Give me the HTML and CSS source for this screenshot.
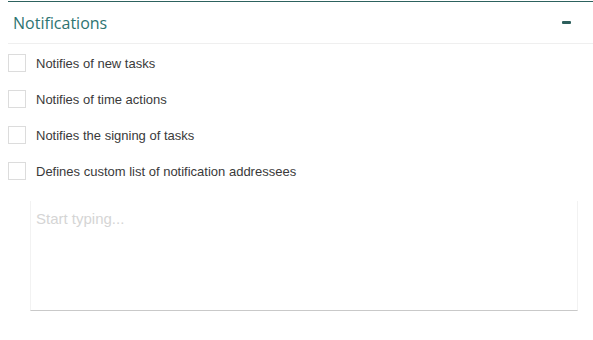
FILE: index.html
```html
<!DOCTYPE html>
<html>
<head>
<meta charset="utf-8">
<link rel="stylesheet" href="styles.css">
</head>
<body>
<section class="panel">
  <header class="panel-head">
    <h2 class="panel-title">Notifications</h2>
    <span class="collapse-icon" aria-label="collapse"></span>
  </header>
  <div class="panel-body">
    <label class="option"><span class="box"></span><span class="label">Notifies of new tasks</span></label>
    <label class="option"><span class="box"></span><span class="label">Notifies of time actions</span></label>
    <label class="option"><span class="box"></span><span class="label">Notifies the signing of tasks</span></label>
    <label class="option"><span class="box"></span><span class="label">Defines custom list of notification addressees</span></label>
    <div class="recipients">
      <div class="placeholder">Start typing...</div>
    </div>
  </div>
</section>
</body>
</html>
```
FILE: styles.css
```css
html, body {
  margin: 0;
  padding: 0;
  background: #fff;
}
body {
  padding-left: 8px;
  font-family: "Liberation Sans", Arial, sans-serif;
}
.panel {
  border-top: 1px solid #2d625e;
  margin-top: 1px;
}
.panel-head {
  display: flex;
  align-items: center;
  justify-content: space-between;
  height: 41px;
  border-bottom: 1px solid #efefef;
  padding: 0 22px 0 5px;
}
.panel-title {
  margin: 0;
  font-family: "Open Sans", sans-serif;
  font-weight: 400;
  font-size: 16px;
  color: #2e7471;
}
.collapse-icon {
  width: 9px;
  height: 3px;
  background: #2d5f5c;
  border-radius: 1px;
}
.panel-body {
  display: flex;
  flex-direction: column;
  padding-top: 10px;
}
.option {
  display: flex;
  align-items: center;
  height: 18px;
  margin-bottom: 18px;
  gap: 10px;
}
.box {
  width: 16px;
  height: 16px;
  border: 1px solid #dcdcdc;
  background: #fff;
}
.label {
  font-size: 13px;
  color: #3a3a3a;
}
.recipients {
  margin: 3px 15px 0 22px;
  height: 110px;
  border-left: 1px solid #f2f2f2;
  border-right: 1px solid #f2f2f2;
  border-bottom: 1px solid #c9c9c9;
  padding: 9px 5px;
  box-sizing: border-box;
}
.placeholder {
  font-size: 15px;
  color: #d5d5d5;
}
```
